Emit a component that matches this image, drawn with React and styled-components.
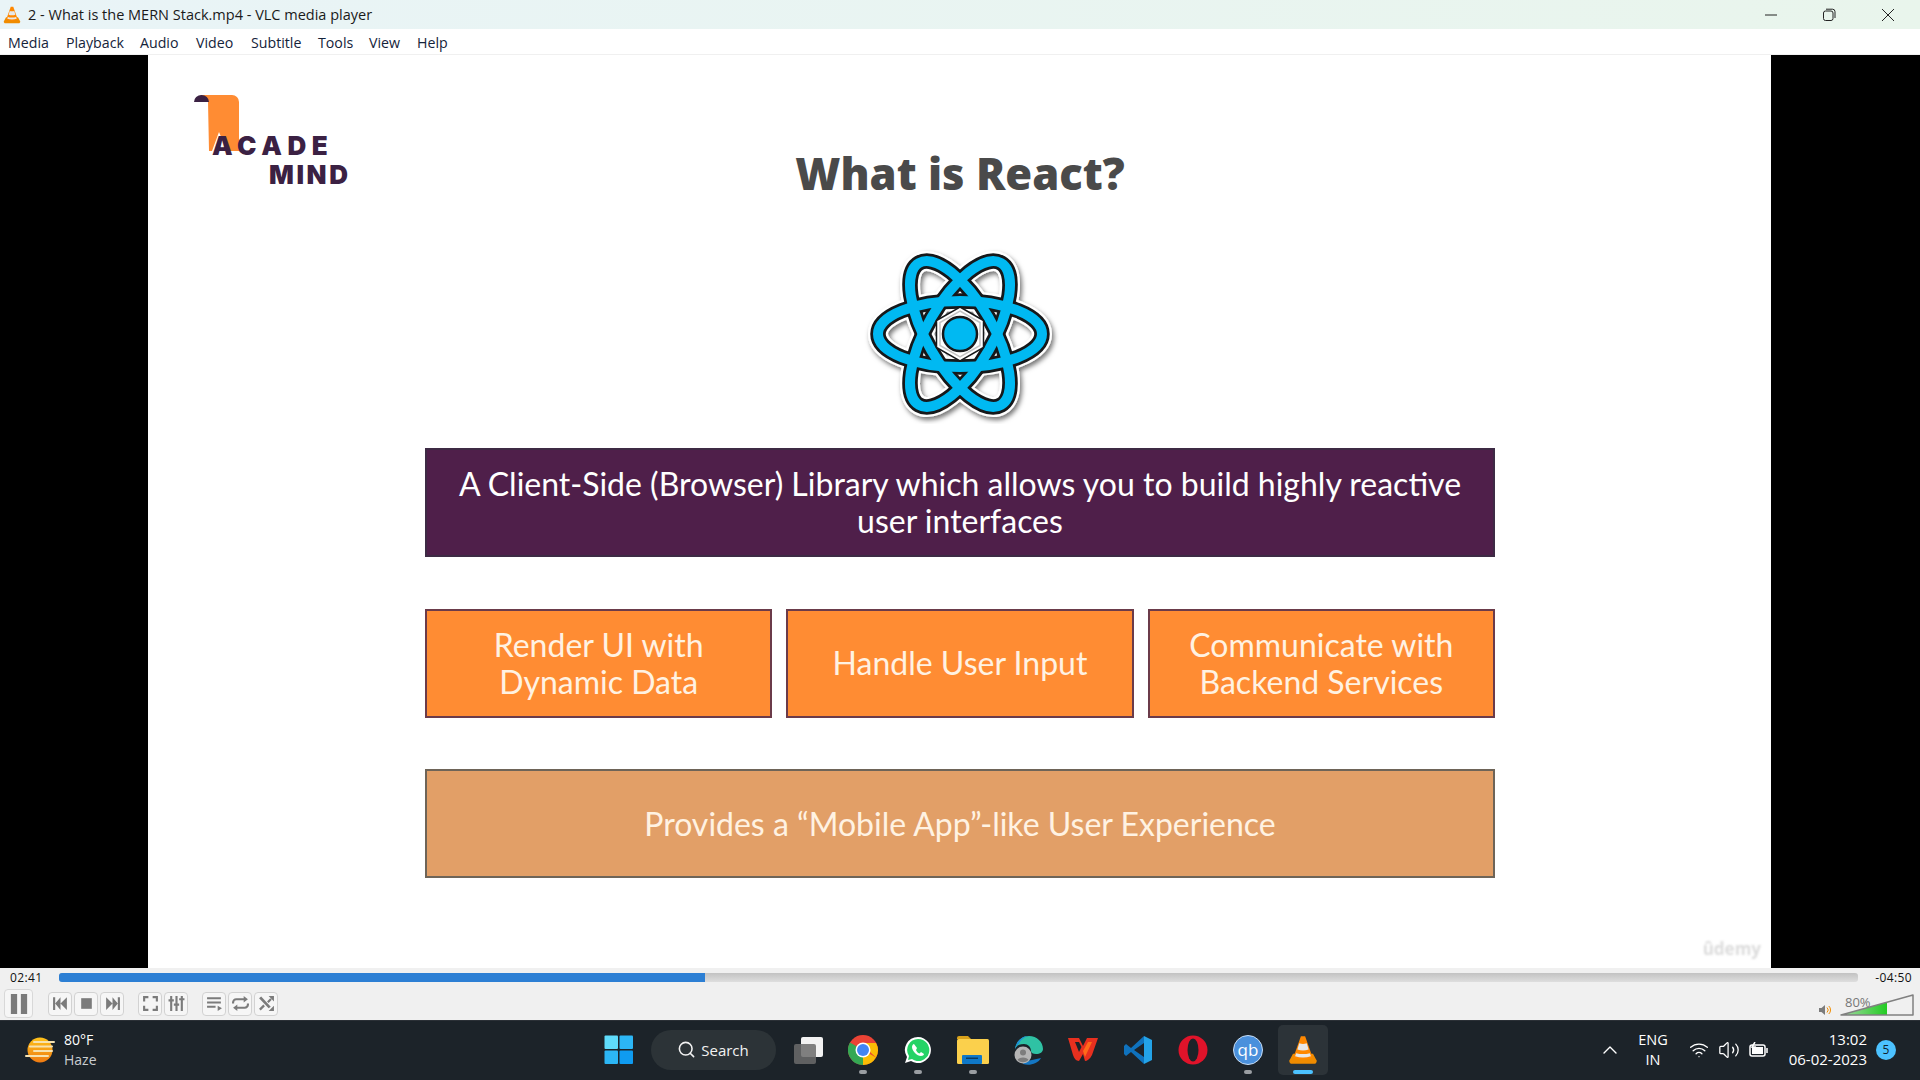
import React from "react";
import styled, { createGlobalStyle } from "styled-components";
import { Search, ChevronUp, Wifi, Volume2 } from "lucide-react";

const GlobalStyle = createGlobalStyle`
  html, body { margin: 0; padding: 0; background: #000; }
  body { width: 1920px; height: 1080px; overflow: hidden; font-family: "Open Sans", "Noto Sans", sans-serif; }
  * { box-sizing: border-box; }
`;

const Window = styled.div`
  width: 1920px;
  height: 1080px;
  display: flex;
  flex-direction: column;
`;

const TitleBar = styled.div`
  height: 29px;
  flex: none;
  display: flex;
  align-items: center;
  padding: 0 3px;
  background: linear-gradient(90deg, #e9f4f7, #e9f5ec);
  color: #1a1a1a;
`;
const TitleText = styled.span`
  font-size: 14.5px;
  margin-left: 7px;
  flex: 1;
`;
const WinButtons = styled.div`
  display: flex;
  align-items: center;
  height: 100%;
`;
const WinButton = styled.div`
  width: 58.5px;
  height: 100%;
  display: flex;
  align-items: center;
  justify-content: center;
`;

const MenuBar = styled.div`
  height: 26px;
  flex: none;
  display: flex;
  align-items: center;
  padding: 1px 0 0 8px;
  background: #fff;
  border-bottom: 1px solid #f0f0f0;
`;
const MenuItem = styled.span`
  font-size: 14.2px;
  color: #14233a;
  width: ${(p) => p.$w}px;
`;

const VideoRow = styled.div`
  height: 913px;
  flex: none;
  display: flex;
  background: #000;
`;
const BlackBar = styled.div`
  width: ${(p) => p.$w}px;
  flex: none;
  background: #000;
`;
const Slide = styled.div`
  flex: 1;
  position: relative;
  background: #fff;
  display: flex;
  flex-direction: column;
  padding: 40px 276px 0 277px;
`;
const Header = styled.div`
  height: 108px;
  display: grid;
  grid-template-columns: 1fr auto 1fr;
  align-items: end;
`;
const Logo = styled.div`
  position: relative;
  align-self: start;
  width: 170px;
  height: 92px;
  margin-left: -234px;
  font-family: "Inter", "Lato", sans-serif;
  font-weight: 900;
  color: #3b2143;
  font-size: 26px;
  line-height: 29px;
`;
const Ribbon = styled.svg`
  position: absolute;
  left: 0;
  top: 0;
`;
const LogoLine = styled.div`
  position: absolute;
  left: ${(p) => p.$x}px;
  top: ${(p) => p.$y}px;
  letter-spacing: ${(p) => p.$sp}px;
`;
const Title = styled.h1`
  margin: 0;
  font-size: 43.5px;
  line-height: 58px;
  font-weight: 800;
  color: #4a4a4a;
  white-space: nowrap;
`;
const Atom = styled.svg`
  display: block;
  margin: 41px auto 0;
  flex: none;
`;
const Banner = styled.div`
  height: 109px;
  width: 100%;
  display: flex;
  align-items: center;
  justify-content: center;
  text-align: center;
  background: ${(p) => p.$bg};
  border: 2px solid ${(p) => p.$line};
  color: ${(p) => p.$fg || "#fff"};
  font-family: "Lato", sans-serif;
  font-size: 32px;
  line-height: 37px;
  padding: 0 20px 1px;
`;
const Lead = styled(Banner)`
  margin-top: 24px;
`;
const BoxRow = styled.div`
  display: grid;
  grid-template-columns: repeat(3, 1fr);
  gap: 14px;
  margin: 51.5px 0;
`;
const Watermark = styled.span`
  position: absolute;
  right: 10px;
  bottom: 8px;
  font-size: 17px;
  font-weight: 700;
  color: #dcdcdc;
  filter: blur(0.8px);
`;

const Controls = styled.div`
  height: 52px;
  flex: none;
  background: #f0f0f0;
  display: flex;
  flex-direction: column;
`;
const SeekRow = styled.div`
  height: 19px;
  display: flex;
  align-items: center;
  padding: 0 8px 0 10px;
  font-size: 12px;
  color: #111;
  letter-spacing: 0.4px;
`;
const SeekBar = styled.div`
  flex: 1;
  height: 9px;
  margin: 0 17px 0 16px;
  border-radius: 3px;
  background: linear-gradient(#c2c2c2, #dedede);
  overflow: hidden;
`;
const SeekFill = styled.div`
  height: 100%;
  background: #2c7fd4;
`;
const ButtonRow = styled.div`
  flex: 1;
  display: flex;
  align-items: center;
  padding-left: 4px;
`;
const Big = styled.div`
  width: 29px;
  height: 29px;
  margin-right: 15px;
  border: 1px solid #d8d8d8;
  border-radius: 4px;
  background: #f6f6f6;
  display: flex;
  align-items: center;
  justify-content: center;
`;
const Small = styled.div`
  width: 24px;
  height: 24px;
  margin-right: 2px;
  border: 1px solid #d2d2d2;
  border-radius: 4px;
  background: #f6f6f6;
  display: flex;
  align-items: center;
  justify-content: center;
`;
const Spacer = styled.div`
  width: ${(p) => p.$w}px;
`;
const VolumeWrap = styled.div`
  margin-left: auto;
  margin-right: 6px;
  position: relative;
  display: flex;
  align-items: flex-end;
  gap: 9px;
  height: 24px;
`;
const VolumeLabel = styled.span`
  position: absolute;
  left: 26px;
  top: 1px;
  font-size: 13px;
  color: #777;
`;

const Taskbar = styled.div`
  height: 60px;
  flex: none;
  background: #1c2329;
  border-top: 1px solid #2b3036;
  padding-bottom: 2px;
  display: flex;
  align-items: center;
  color: #fff;
`;
const Weather = styled.div`
  display: flex;
  align-items: center;
  gap: 9px;
  margin-left: 25px;
  width: 578px;
`;
const WeatherText = styled.div`
  font-size: 14px;
  line-height: 20px;
`;
const Dim = styled.div`
  color: #c9cdd0;
`;
const Apps = styled.div`
  display: flex;
  align-items: center;
`;
const AppSlot = styled.div`
  position: relative;
  width: ${(p) => p.$w || 55}px;
  height: 50px;
  border-radius: 5px;
  display: flex;
  align-items: center;
  justify-content: center;
`;
const ActiveSlot = styled(AppSlot)`
  margin-left: 3px;
  background: #2c3338;
`;
const Dot = styled.i`
  position: absolute;
  left: 50%;
  bottom: 1px;
  transform: translateX(-50%);
  width: ${(p) => (p.$active ? 20 : 8)}px;
  height: 3.5px;
  border-radius: 2px;
  background: ${(p) => (p.$active ? "#4cc2ff" : "#9a9ea2")};
`;
const SearchPill = styled.div`
  width: 125px;
  height: 40px;
  margin: 0 4.5px 0 16.5px;
  border-radius: 20px;
  background: #2c3337;
  display: flex;
  align-items: center;
  justify-content: center;
  gap: 5px;
  font-size: 15px;
  color: #f2f2f2;
`;
const Tray = styled.div`
  margin-left: auto;
  display: flex;
  align-items: center;
  padding-right: 24px;
`;
const Lang = styled.div`
  font-size: 14.5px;
  line-height: 20px;
  text-align: center;
  margin: 0 21px 0 16px;
`;
const TrayIcons = styled.div`
  display: flex;
  align-items: center;
  gap: 9px;
  margin-right: 20px;
`;
const Clock = styled.div`
  font-size: 15px;
  line-height: 20px;
  text-align: right;
  margin: 0 9px 2px 0;
`;
const Badge = styled.div`
  width: 20px;
  height: 20px;
  border-radius: 50%;
  background: #4cc2ff;
  color: #10222e;
  font-size: 12px;
  display: flex;
  align-items: center;
  justify-content: center;
`;

const Cone = ({ size = 20 }) => (
  <svg width={size} height={size} viewBox="0 0 24 24">
    <path d="M1 20.5 4 15h16l3 5.5c0 1.5-1 2.500-2 2.500H3c-1 0-2-1-2-2.500z" fill="#f08c00" />
    <path d="M10.300 1h3.400l6 17c-3 2-12.400 2-15.400 0z" fill="#ff8800" />
    <path d="M9 6.500c2 .8 4 .8 6 0l1.500 5c-3 1.100-6 1.100-9 0z" fill="#e8e8e8" />
    <path d="M6.500 14.500c3.500 1 7.500 1 11 0l.8 2.500c-4 1.300-8.600 1.300-12.600 0z" fill="#e8e8e8" />
  </svg>
);

const ReactAtom = () => {
  const rings = [0, 60, 120];
  const ring = (stroke, width) =>
    rings.map((r) => (
      <ellipse key={r} cx="100" cy="90" rx="82" ry="33" fill="none" stroke={stroke} strokeWidth={width} transform={`rotate(${r} 100 90)`} />
    ));
  return (
    <Atom width="200" height="180" viewBox="0 0 200 180">
      <defs>
        <filter id="drop" x="-10%" y="-10%" width="120%" height="120%">
          <feDropShadow dx="2" dy="3" stdDeviation="2.500" floodColor="#000" floodOpacity="0.55" />
        </filter>
      </defs>
      <g filter="url(#drop)">{ring("#fff", 20)}</g>
      {ring("#16181a", 15.5)}
      {ring("#00b9f2", 10)}
      <polygon points="100,63 123.500,76.500 123.500,103.500 100,117 76.500,103.500 76.500,76.500" fill="#fff" stroke="#16181a" strokeWidth="1.500" />
      <polygon points="100,67 120,78.500 120,101.500 100,113 80,101.500 80,78.500" fill="#fff" stroke="#c4c4c4" strokeWidth="1.500" />
      <circle cx="100" cy="90" r="17" fill="#00b9f2" stroke="#16181a" strokeWidth="2.500" />
    </Atom>
  );
};

const Glyph = ({ children, size = 17, vb = "0 0 16 16" }) => (
  <svg width={size} height={size} viewBox={vb} fill="#7b7b7b" stroke="none">
    {children}
  </svg>
);

const Tile = ({ x, y, c }) => <rect x={x} y={y} width="13.500" height="13.500" rx="1" fill={c} />;

const App = () => (
  <Window>
    <GlobalStyle />
    <TitleBar>
      <Cone size={18} />
      <TitleText>2 - What is the MERN Stack.mp4 - VLC media player</TitleText>
      <WinButtons>
        <WinButton>
          <svg width="14" height="14" viewBox="0 0 14 14"><path d="M1 7h12" stroke="#222" strokeWidth="1" /></svg>
        </WinButton>
        <WinButton>
          <svg width="14" height="14" viewBox="0 0 14 14" fill="none" stroke="#222" strokeWidth="1"><rect x="1.500" y="3" width="9.500" height="9.500" rx="2" /><path d="M4 1.200h6.500a2.500 2.500 0 0 1 2.500 2.500V10" /></svg>
        </WinButton>
        <WinButton>
          <svg width="14" height="14" viewBox="0 0 14 14"><path d="M1 1l12 12M13 1L1 13" stroke="#222" strokeWidth="1" /></svg>
        </WinButton>
      </WinButtons>
    </TitleBar>

    <MenuBar>
      <MenuItem $w={58}>Media</MenuItem>
      <MenuItem $w={74}>Playback</MenuItem>
      <MenuItem $w={56}>Audio</MenuItem>
      <MenuItem $w={55}>Video</MenuItem>
      <MenuItem $w={67}>Subtitle</MenuItem>
      <MenuItem $w={51}>Tools</MenuItem>
      <MenuItem $w={48}>View</MenuItem>
      <MenuItem $w={40}>Help</MenuItem>
    </MenuBar>

    <VideoRow>
      <BlackBar $w={148} />
      <Slide>
        <Header>
          <Logo>
            <Ribbon width="60" height="62" viewBox="0 0 60 62">
              <path d="M9 0h32a7 7 0 0 1 7 7V56H36L28 37 21 56H18L17 7z" fill="#ff8c33" />
              <path d="M3 7a7.500 7 0 0 1 15 0z" fill="#3b2143" />
            </Ribbon>
            <LogoLine $x={21} $y={36} $sp={5.6}>ACADE</LogoLine>
            <LogoLine $x={78} $y={65} $sp={2.6}>MIND</LogoLine>
          </Logo>
          <Title>What is React?</Title>
          <span />
        </Header>
        <ReactAtom />
        <Lead $bg="#4f1f4a" $line="#3d2a44">
          A Client-Side (Browser) Library which allows you to build highly reactive<br />user interfaces
        </Lead>
        <BoxRow>
          <Banner $bg="#ff8c33" $line="#6b3b4a" $fg="#fff2e2">Render UI with<br />Dynamic Data</Banner>
          <Banner $bg="#ff8c33" $line="#6b3b4a" $fg="#fff2e2">Handle User Input</Banner>
          <Banner $bg="#ff8c33" $line="#6b3b4a" $fg="#fff2e2">Communicate with<br />Backend Services</Banner>
        </BoxRow>
        <Banner $bg="#e29f67" $line="#6e6458" $fg="#fff2e2">Provides a “Mobile App”-like User Experience</Banner>
        <Watermark>ûdemy</Watermark>
      </Slide>
      <BlackBar $w={149} />
    </VideoRow>

    <Controls>
      <SeekRow>
        <span>02:41</span>
        <SeekBar>
          <SeekFill style={{ width: `${(646 / 1799) * 100}%` }} />
        </SeekBar>
        <span>-04:50</span>
      </SeekRow>
      <ButtonRow>
        <Big>
          <Glyph size={20}><rect x="1.500" y="0" width="5" height="16" /><rect x="9.500" y="0" width="5" height="16" /></Glyph>
        </Big>
        <Small><Glyph><path d="M1 2h2v12H1zM8 2v12L3 8zM14 2v12L8 8z" /></Glyph></Small>
        <Small><Glyph><rect x="3" y="3" width="10" height="10" /></Glyph></Small>
        <Small><Glyph><path d="M2 2v12l6-6zM8 2v12l5-6zM13 2h2v12h-2z" /></Glyph></Small>
        <Spacer $w={12} />
        <Small><Glyph><path d="M1 1h5v2H3v3H1zM10 1h5v5h-2V3h-3zM1 10h2v3h3v2H1zM13 10h2v5h-5v-2h3z" /></Glyph></Small>
        <Small><Glyph><path d="M2 1h2v3h1.500v2H4v9H2V6H.500V4H2zM7 1h2v7h1.500v2H9v5H7v-5H5.500V8H7zM12 1h2v2h1.500v2H14v10h-2V5h-1.500V3H12z" /></Glyph></Small>
        <Spacer $w={12} />
        <Small><Glyph><path d="M1 2h13v2H1zM1 6h13v2H1zM1 10h8v2H1zM11 10l4 2.500-4 2.500z" /></Glyph></Small>
        <Small><Glyph><path d="M4 3h7V1l4 3-4 3V5H4a2 2 0 0 0-2 2v1H0V7a4 4 0 0 1 4-4zM12 13H5v2l-4-3 4-3v2h7a2 2 0 0 0 2-2V8h2v1a4 4 0 0 1-4 4z" /></Glyph></Small>
        <Small>
          <Glyph>
            <path d="M1 3l2-1.500L12 11l-2 1.500zM1 13l4-4 1.500 1.500-4 4zM8.500 6l3-3 1.500 1.500-3 3z" />
            <path d="M10 1h5v5zM15 10v5h-5z" />
          </Glyph>
        </Small>
        <VolumeWrap>
          <svg width="12" height="12" viewBox="0 0 12 12"><path d="M0 4h2.500L6 1v10L2.500 8H0z" fill="#7b7b7b" /><path d="M8 3.500a3.500 3.500 0 0 1 0 5M9.800 2a5.500 5.500 0 0 1 0 8" fill="none" stroke="#f08c00" strokeWidth="1" /></svg>
          <svg width="74" height="22" viewBox="0 0 74 22">
            <defs>
              <linearGradient id="vol" x1="0" x2="1"><stop offset="0" stopColor="#a8d8a8" /><stop offset="1" stopColor="#22cc22" /></linearGradient>
            </defs>
            <path d="M1 21L47 8.200V21z" fill="url(#vol)" />
            <path d="M1 21L73 1v20z" fill="none" stroke="#808080" strokeWidth="1.500" strokeLinejoin="round" />
          </svg>
          <VolumeLabel>80%</VolumeLabel>
        </VolumeWrap>
      </ButtonRow>
    </Controls>

    <Taskbar>
      <Weather>
        <svg width="30" height="28" viewBox="0 0 30 28">
          <defs>
            <linearGradient id="sun" x1="0" y1="0" x2="0" y2="1"><stop offset="0" stopColor="#ffc21a" /><stop offset="1" stopColor="#ee7a12" /></linearGradient>
          </defs>
          <circle cx="15" cy="14" r="12.500" fill="url(#sun)" />
          <path d="M9 6h20M5 10.500h22M9 15h18M1 20h22" stroke="#f7e2b0" strokeWidth="2" strokeLinecap="round" />
        </svg>
        <WeatherText>
          <div>80°F</div>
          <Dim>Haze</Dim>
        </WeatherText>
      </Weather>
      <Apps>
        <AppSlot $w={31}>
          <svg width="30" height="30" viewBox="0 0 30 30">
            <Tile x={0.5} y={0.5} c="#5fdcfb" />
            <Tile x={15.5} y={0.5} c="#2cb6f5" />
            <Tile x={0.5} y={15.5} c="#2cb6f5" />
            <Tile x={15.5} y={15.5} c="#0f9bf0" />
          </svg>
        </AppSlot>
        <SearchPill><Search size={19} strokeWidth={2} />Search</SearchPill>
        <AppSlot>
          <svg width="30" height="28" viewBox="0 0 30 28">
            <rect x="8" y="1" width="22" height="20" rx="2" fill="#f2f2f2" />
            <rect x="1" y="8" width="22" height="20" rx="2" fill="#6b6b6b" fillOpacity=".85" />
          </svg>
        </AppSlot>
        <AppSlot>
          <svg width="30" height="30" viewBox="0 0 30 30">
            <circle cx="15" cy="15" r="15" fill="#ea4335" />
            <path d="M15 15L28 22.500A15 15 0 0 1 15 30z" fill="#fbbc05" />
            <path d="M15 15L15 30A15 15 0 0 1 2 7.500z" fill="#34a853" />
            <path d="M15 8h13a15 15 0 0 1 0 14.500L20 15z" fill="#fbbc05" />
            <circle cx="15" cy="15" r="7.500" fill="#fff" />
            <circle cx="15" cy="15" r="6" fill="#4285f4" />
          </svg>
          <Dot />
        </AppSlot>
        <AppSlot>
          <svg width="28" height="28" viewBox="0 0 28 28">
            <path d="M14 1a13 13 0 0 0-11 20L1 27l6-2A13 13 0 1 0 14 1z" fill="#fff" />
            <path d="M14 3a11 11 0 0 0-9 17l-1 4 4-1A11 11 0 1 0 14 3z" fill="#25d366" />
            <path d="M10 8c-1 0-2 1.500-2 3 0 4 5 9 9 9 1.500 0 3-1 3-2l-3-2-1.500 1.500c-1.500-.5-3-2-3.500-3.500L13 12z" fill="#fff" />
          </svg>
          <Dot />
        </AppSlot>
        <AppSlot>
          <svg width="32" height="28" viewBox="0 0 32 28">
            <path d="M0 2a2 2 0 0 1 2-2h9l3 3h-14z" fill="#d9a21b" />
            <rect x="0" y="3" width="32" height="25" rx="1.500" fill="#fbd04c" />
            <rect x="5" y="19" width="20" height="9" rx="1" fill="#0f78c8" />
            <rect x="9" y="21.500" width="12" height="1.500" fill="#0a3a62" />
          </svg>
          <Dot />
        </AppSlot>
        <AppSlot>
          <svg width="30" height="30" viewBox="0 0 30 30">
            <path d="M2 14C3 6 9 1 16 1c8 0 14 6 14 13 0 3-3 5-7 5-3 0-5-1-5-3 0-4-3-7-7-7-5 0-8 2-9 5z" fill="#2fc2a4" />
            <path d="M2 14C3 6 9 1 16 1c-5 1-9 4-10 8-2 1-3 3-4 5z" fill="#1c8fd8" />
            <path d="M10 29c6 2 15 0 18-6l-9 2c-3 1-6 0-8-2z" fill="#1477c4" />
            <circle cx="10" cy="20" r="8.500" fill="#b5b5b5" />
            <circle cx="10" cy="17.500" r="3" fill="#7d7d7d" />
            <path d="M4.500 25c1-3.500 10-3.500 11 0a8 8 0 0 1-11 0z" fill="#7d7d7d" />
          </svg>
        </AppSlot>
        <AppSlot>
          <svg width="30" height="25" viewBox="0 0 30 25">
            <path d="M0 1H11L15 9 19 1H30L24 18C22 22 19 24 17 24L15 17 11 24C8 24 6 21 5 18z" fill="#e8301f" />
            <path d="M7 5L11 15 13.500 10 11 5z" fill="#1c2329" />
            <path d="M24 5H20L15 14 17 20z" fill="#ff6a1a" />
          </svg>
        </AppSlot>
        <AppSlot>
          <svg width="30" height="30" viewBox="0 0 30 30">
            <path d="M21 1L29 5V25L21 29z" fill="#23a3e8" />
            <path d="M21 1L8 13 3 9 1 11V19L3 21 8 17 21 29V22L11 15 21 8z" fill="#0f72bd" />
          </svg>
        </AppSlot>
        <AppSlot>
          <svg width="30" height="30" viewBox="0 0 30 30">
            <circle cx="15" cy="15" r="14.500" fill="#e0132a" />
            <ellipse cx="15" cy="15" rx="5.500" ry="11.500" fill="#1c2329" />
          </svg>
        </AppSlot>
        <AppSlot>
          <svg width="30" height="30" viewBox="0 0 30 30">
            <circle cx="15" cy="15" r="14.500" fill="#4a90dc" stroke="#c8dcf2" strokeWidth="1" />
            <text x="15" y="21" textAnchor="middle" fontSize="17" fontFamily="Open Sans, sans-serif" fill="#fff">qb</text>
          </svg>
          <Dot />
        </AppSlot>
        <ActiveSlot $w={50}>
          <Cone size={30} />
          <Dot $active />
        </ActiveSlot>
      </Apps>
      <Tray>
        <ChevronUp size={24} strokeWidth={1.4} />
        <Lang>ENG<br />IN</Lang>
        <TrayIcons>
          <Wifi size={20} strokeWidth={1.6} />
          <Volume2 size={22} strokeWidth={1.4} />
          <svg width="20" height="16" viewBox="0 0 20 16" fill="none" stroke="#fff" strokeWidth="1.500">
            <rect x="1" y="3" width="15" height="11" rx="2" />
            <rect x="3" y="5" width="11" height="7" fill="#fff" stroke="none" />
            <path d="M18 6v5" />
            <path d="M6 0L3 5h3l-2 4" />
          </svg>
        </TrayIcons>
        <Clock>13:02<br />06-02-2023</Clock>
        <Badge>5</Badge>
      </Tray>
    </Taskbar>
  </Window>
);

export default App;
